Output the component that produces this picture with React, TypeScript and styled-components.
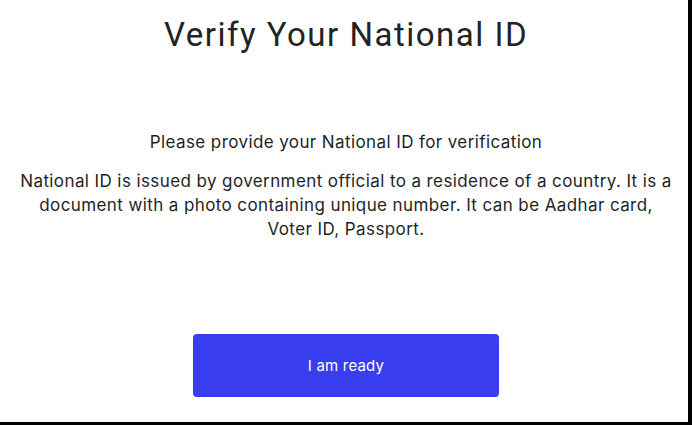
import React from "react";
import styled, { createGlobalStyle } from "styled-components";

const Global = createGlobalStyle`
  html, body { margin: 0; padding: 0; background: #000; }
  body { width: 692px; height: 425px; overflow: hidden; }
`;

const Screen = styled.div`
  width: 688px;
  height: 422px;
  background: #fff;
  display: flex;
  flex-direction: column;
  align-items: center;
  box-sizing: border-box;
  padding: 16px 14px 0 18px;
`;

const Title = styled.h1`
  margin: 0;
  font-family: Roboto, "Liberation Sans", sans-serif;
  font-weight: 400;
  font-size: 33px;
  line-height: 38px;
  color: #222326;
  letter-spacing: 1.5px;
`;

const Text = styled.p<{ $top: number }>`
  margin: ${(p) => p.$top}px 0 0;
  font-family: Inter, "Noto Sans", sans-serif;
  font-size: 17px;
  line-height: 24px;
  letter-spacing: 0.4px;
  color: #1f1f1f;
  text-align: center;
`;

const Button = styled.button`
  margin-top: 93px;
  width: 306px;
  height: 63px;
  border: none;
  border-radius: 4px;
  background: #383df0;
  color: #fff;
  font-family: Inter, "Noto Sans", sans-serif;
  font-size: 15px;
  letter-spacing: 0.2px;
  cursor: pointer;
`;

export default function App() {
  return (
    <>
      <Global />
      <Screen>
        <Title>Verify Your National ID</Title>
        <Text $top={76}>Please provide your National ID for verification</Text>
        <Text $top={15}>
          National ID is issued by government official to a residence of a country. It is a
          document with a photo containing unique number. It can be Aadhar card, Voter ID,
          Passport.
        </Text>
        <Button>I am ready</Button>
      </Screen>
    </>
  );
}
